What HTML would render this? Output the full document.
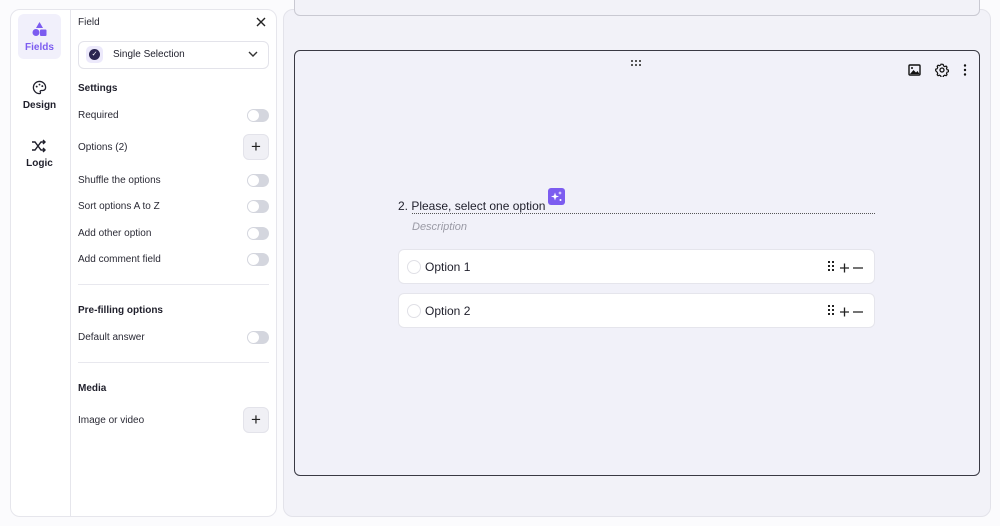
<!DOCTYPE html>
<html><head><style>
*{box-sizing:border-box;margin:0;padding:0}
body{width:1000px;height:526px;background:#fbfbfd;font-family:"Liberation Sans",sans-serif;position:relative;overflow:hidden;color:#1f1f2b}
.abs{position:absolute}
.lp{left:10px;top:9px;width:267px;height:508px;background:#fff;border:1px solid #e6e6ec;border-radius:10px}
.col{left:70px;top:9px;width:1px;height:508px;background:#e6e6ec}
.nav{left:18px;width:43px;text-align:center;font-size:10px;font-weight:bold;color:#1f1f2b}
.lbl{left:78px;font-size:10px;color:#2a2a35}
.h{left:78px;font-size:10px;font-weight:bold;color:#1f1f2b}
.tg{left:247px;width:22px;height:13px;border-radius:7px;background:#d4d6de}
.tg::after{content:"";position:absolute;left:1px;top:1px;width:11px;height:11px;border-radius:50%;background:#fff}
.pb{left:243px;width:26px;height:26px;border-radius:6px;background:#f0f0f5;border:1px solid #e3e3ea;text-align:center;line-height:23px;font-size:17px;color:#222}
.sep{left:78px;width:191px;height:1px;background:#e8e8ee}
.rp{left:283px;top:9px;width:708px;height:508px;background:#f2f2f8;border:1px solid #e3e3ea;border-radius:10px}
.opt{left:398px;width:477px;height:35px;background:#fff;border:1px solid #e5e5ec;border-radius:6px}
.opt .c{position:absolute;left:8px;top:10px;width:14px;height:14px;border:1px solid #e0e0e6;border-radius:50%}
.opt .t{position:absolute;left:26px;top:10px;font-size:12px;color:#1f1f2b}
.opt svg{position:absolute;right:10px;top:11px}
</style></head><body>
<div class="abs lp"></div>
<div class="abs col"></div>
<div class="abs" style="left:18px;top:14px;width:43px;height:45px;background:#f1f0fb;border-radius:6px"></div>
<svg class="abs" style="left:31px;top:21px" width="17" height="16" viewBox="0 0 17 16"><polygon points="8.5,1 12,7 5,7" fill="#7c5cf0"/><circle cx="5" cy="11.5" r="3.5" fill="#7c5cf0"/><rect x="9" y="8.5" width="6.5" height="6.5" rx="1" fill="#7c5cf0"/></svg>
<div class="abs nav" style="top:42px;color:#7c5cf0">Fields</div>
<svg class="abs" style="left:32px;top:80px" width="15" height="15" viewBox="0 0 16 16"><path d="M8 1.5a6.5 6.5 0 1 0 0 13c1 0 1.3-.8.9-1.5-.5-.8 0-1.8 1-1.8h1.6A3 3 0 0 0 14.5 8 6.5 6.5 0 0 0 8 1.5z" fill="none" stroke="#1f1f2b" stroke-width="1.4"/><circle cx="5" cy="7" r="1" fill="#1f1f2b"/><circle cx="8" cy="4.8" r="1" fill="#1f1f2b"/><circle cx="11" cy="6.5" r="1" fill="#1f1f2b"/></svg>
<div class="abs nav" style="top:100px">Design</div>
<svg class="abs" style="left:31px;top:139px" width="16" height="14" viewBox="0 0 16 14"><path d="M1 3h3l6 8h4M1 11h3l6-8h4M12 1l2 2-2 2M12 9l2 2-2 2" fill="none" stroke="#1f1f2b" stroke-width="1.4"/></svg>
<div class="abs nav" style="top:158px">Logic</div>

<div class="abs lbl" style="top:17px">Field</div>
<svg class="abs" style="left:256px;top:17px" width="10" height="10" viewBox="0 0 10 10"><path d="M1 1l8 8M9 1l-8 8" stroke="#222" stroke-width="1.4"/></svg>
<div class="abs" style="left:78px;top:41px;width:191px;height:28px;border:1px solid #e3e3ea;border-radius:6px"></div>
<div class="abs" style="left:86px;top:46px;width:17px;height:17px;border-radius:5px;background:#ece9fb"></div>
<div class="abs" style="left:89px;top:49px;width:11px;height:11px;border-radius:50%;background:#2a2550;color:#fff;font-size:7px;text-align:center;line-height:11px">✓</div>
<div class="abs" style="left:113px;top:49px;font-size:10px">Single Selection</div>
<svg class="abs" style="left:248px;top:51px" width="10" height="7" viewBox="0 0 10 7"><path d="M1 1l4 4 4-4" fill="none" stroke="#333" stroke-width="1.4"/></svg>
<div class="h abs" style="top:83px">Settings</div>
<div class="lbl abs" style="top:110px">Required</div><div class="tg abs" style="top:109px"></div>
<div class="lbl abs" style="top:142px">Options (2)</div><div class="pb abs" style="top:134px">+</div>
<div class="lbl abs" style="top:175px">Shuffle the options</div><div class="tg abs" style="top:174px"></div>
<div class="lbl abs" style="top:201px">Sort options A to Z</div><div class="tg abs" style="top:200px"></div>
<div class="lbl abs" style="top:228px">Add other option</div><div class="tg abs" style="top:227px"></div>
<div class="lbl abs" style="top:254px">Add comment field</div><div class="tg abs" style="top:253px"></div>
<div class="sep abs" style="top:284px"></div>
<div class="h abs" style="top:305px">Pre-filling options</div>
<div class="lbl abs" style="top:332px">Default answer</div><div class="tg abs" style="top:331px"></div>
<div class="sep abs" style="top:362px"></div>
<div class="h abs" style="top:383px">Media</div>
<div class="lbl abs" style="top:415px">Image or video</div><div class="pb abs" style="top:407px">+</div>

<div class="abs rp"></div>
<div class="abs" style="left:294px;top:-10px;width:686px;height:26px;border:1px solid #c9c9d2;border-radius:6px;background:#f2f2f8"></div>
<div class="abs" style="left:294px;top:50px;width:686px;height:426px;border:1px solid #3a3a44;border-radius:6px;background:#f1f1f9"></div>
<svg class="abs" style="left:631px;top:60px" width="11" height="7"><g fill="#555"><rect x="0" y="0" width="2" height="2"/><rect x="4" y="0" width="2" height="2"/><rect x="8" y="0" width="2" height="2"/><rect x="0" y="4" width="2" height="2"/><rect x="4" y="4" width="2" height="2"/><rect x="8" y="4" width="2" height="2"/></g></svg>
<svg class="abs" style="left:908px;top:64px" width="13" height="12" viewBox="0 0 13 12"><rect x="1" y="1" width="11" height="10" rx="1" fill="none" stroke="#111" stroke-width="1.4"/><path d="M2 10l3.5-4 2.5 2.5 1.5-1.5 2 3z" fill="#111"/><circle cx="4" cy="4" r="1" fill="#111"/></svg>
<svg class="abs" style="left:935px;top:63px" width="14" height="14" viewBox="0 0 14 14"><circle cx="7" cy="7" r="2" fill="none" stroke="#111" stroke-width="1.3"/><path d="M7 1.2l1.2.3.3 1.4 1.3.7 1.3-.5.9 1-.5 1.3.6 1.3 1.4.4v1.6l-1.4.4-.6 1.3.5 1.3-.9 1-1.3-.5-1.3.7-.3 1.4H6l-.3-1.4-1.3-.7-1.3.5-.9-1 .5-1.3-.6-1.3L.7 7.8V6.2l1.4-.4.6-1.3-.5-1.3.9-1 1.3.5 1.3-.7L6 1.2z" fill="none" stroke="#111" stroke-width="1.2"/></svg>
<svg class="abs" style="left:963px;top:64px" width="4" height="12"><circle cx="2" cy="1.5" r="1.2" fill="#111"/><circle cx="2" cy="6" r="1.2" fill="#111"/><circle cx="2" cy="10.5" r="1.2" fill="#111"/></svg>

<div class="abs" style="left:398px;top:199px;font-size:12px;color:#1f1f2b">2. Please, select one option</div>
<svg class="abs" style="left:548px;top:188px" width="17" height="17" viewBox="0 0 17 17"><rect width="17" height="17" rx="3" fill="#7c5cf0"/><path d="M7 4.5l1 3 3 1-3 1-1 3-1-3-3-1 3-1z" fill="#fff"/><path d="M12 3l.5 1.5L14 5l-1.5.5L12 7l-.5-1.5L10 5l1.5-.5z" fill="#fff"/><circle cx="12.5" cy="12" r="1" fill="#fff"/></svg>
<div class="abs" style="left:412px;top:213px;width:463px;border-top:1px dotted #555"></div>
<div class="abs" style="left:412px;top:221px;font-size:11px;font-style:italic;color:#9a9aa5">Description</div>
<div class="abs opt" style="top:249px"><div class="c"></div><div class="t">Option 1</div><svg width="36" height="12" viewBox="0 0 36 12"><g fill="#222"><rect x="0" y="0" width="2" height="2"/><rect x="4" y="0" width="2" height="2"/><rect x="0" y="4" width="2" height="2"/><rect x="4" y="4" width="2" height="2"/><rect x="0" y="8" width="2" height="2"/><rect x="4" y="8" width="2" height="2"/></g><path d="M12 7h9M16.5 2.5v9M25 7h10" stroke="#222" stroke-width="1.3"/></svg></div>
<div class="abs opt" style="top:293px"><div class="c"></div><div class="t">Option 2</div><svg width="36" height="12" viewBox="0 0 36 12"><g fill="#222"><rect x="0" y="0" width="2" height="2"/><rect x="4" y="0" width="2" height="2"/><rect x="0" y="4" width="2" height="2"/><rect x="4" y="4" width="2" height="2"/><rect x="0" y="8" width="2" height="2"/><rect x="4" y="8" width="2" height="2"/></g><path d="M12 7h9M16.5 2.5v9M25 7h10" stroke="#222" stroke-width="1.3"/></svg></div>
</body></html>
